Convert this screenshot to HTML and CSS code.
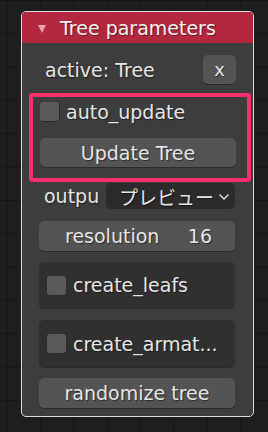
FILE: index.html
```html
<!DOCTYPE html>
<html>
<head>
<meta charset="utf-8">
<link rel="stylesheet" href="styles.css">
</head>
<body>
<div class="node">
  <div class="header">
    <span class="tri"></span>
    <span class="title">Tree parameters</span>
  </div>
  <div class="content">
    <div class="row active-row">
      <span class="label">active: Tree</span>
      <span class="btn xbtn">x</span>
    </div>
    <div class="highlight">
      <div class="check-row">
        <span class="checkbox"></span>
        <span class="label">auto_update</span>
      </div>
      <div class="btn wide">Update Tree</div>
    </div>
    <div class="row out-row">
      <span class="label">outpu</span>
      <div class="dropdown">
        <span class="dd-text">プレビュー</span>
        <svg class="chev" width="10" height="6" viewBox="0 0 10 6"><path d="M1 1 L5 5 L9 1" fill="none" stroke="#e0e0e0" stroke-width="1.5" stroke-linecap="round" stroke-linejoin="round"/></svg>
      </div>
    </div>
    <div class="btn wide numfield">
      <span>resolution</span>
      <span>16</span>
    </div>
    <div class="panel leafs">
      <span class="checkbox"></span>
      <span class="label">create_leafs</span>
    </div>
    <div class="panel armat">
      <span class="checkbox"></span>
      <span class="label">create_armat...</span>
    </div>
    <div class="btn wide rand">randomize tree</div>
  </div>
</div>
</body>
</html>
```
FILE: styles.css
```css
html, body {
  margin: 0;
  padding: 0;
}
body {
  width: 268px;
  height: 432px;
  overflow: hidden;
  background-color: #1e1e1e;
  background-image:
    linear-gradient(to right, #161616 1px, transparent 1px),
    linear-gradient(to bottom, #161616 1px, transparent 1px);
  background-size: 33.33px 33.33px;
  background-position: 6.5px 0;
  font-family: "DejaVu Sans", "Noto Sans CJK JP", sans-serif;
  color: #e6e6e6;
  padding-top: 11px;
  box-sizing: border-box;
}
.node {
  margin-left: 21px;
  width: 233px;
  height: 406px;
  box-sizing: border-box;
  border: 1px solid #dcdcdc;
  border-radius: 5px;
  background: #3d3d3d;
  overflow: hidden;
}
.header {
  height: 31px;
  background: #b3283e;
  display: flex;
  align-items: center;
  padding-left: 16px;
  box-sizing: border-box;
}
.tri {
  width: 0;
  height: 0;
  border-left: 4px solid transparent;
  border-right: 4px solid transparent;
  border-top: 8px solid #e7a3ad;
  margin-top: 2px;
}
.title {
  margin-left: 14px;
  font-size: 19px;
  color: #f2f2f2;
  text-shadow: 1px 1px 1px rgba(0,0,0,0.45);
}
.content {
  display: flex;
  flex-direction: column;
  padding: 12px 0 0 0;
}
.label {
  font-size: 19px;
  text-shadow: 1px 1px 1px rgba(0,0,0,0.5);
  white-space: nowrap;
}
.row {
  display: flex;
  align-items: center;
}
.active-row {
  height: 29px;
  padding-left: 23px;
  padding-right: 17px;
  justify-content: space-between;
}
.btn {
  background: #545454;
  border-radius: 5px;
  box-shadow: 0 1px 0 #2b2b2b;
  font-size: 19px;
  text-shadow: 1px 1px 1px rgba(0,0,0,0.5);
  display: flex;
  align-items: center;
  justify-content: center;
  box-sizing: border-box;
}
.xbtn {
  width: 33px;
  height: 29px;
  font-size: 18px;
}
.highlight {
  margin-top: 9px;
  margin-left: 7px;
  margin-right: 2px;
  height: 89px;
  box-sizing: border-box;
  border: 4px solid #f72d6c;
  border-radius: 3px;
  padding: 2px 11px 0 7px;
  display: flex;
  flex-direction: column;
}
.check-row {
  height: 25px;
  display: flex;
  align-items: center;
}
.checkbox {
  width: 19px;
  height: 19px;
  background: #5a5a5a;
  border-radius: 3px;
  box-shadow: 1px 1px 0 #2c2c2c;
  flex: none;
}
.check-row .label {
  margin-left: 7px;
}
.wide {
  height: 29px;
}
.highlight .wide {
  margin-top: 14px;
}
.out-row {
  margin-top: 1px;
  height: 26px;
  padding-left: 22px;
}
.out-row .label {
  width: 62px;
}
.dropdown {
  width: 129px;
  height: 26px;
  background: #2b2b2b;
  border-radius: 5px;
  display: flex;
  align-items: center;
  padding-left: 13px;
  box-sizing: border-box;
  overflow: hidden;
}
.dd-text {
  font-size: 19px;
  font-family: "Noto Sans CJK JP", sans-serif;
  text-shadow: 1px 1px 1px rgba(0,0,0,0.5);
  white-space: nowrap;
  flex: none;
}
.chev {
  margin-left: 5px;
  margin-top: 2px;
  flex: none;
}
.numfield {
  margin: 12px 18px 0 17px;
  height: 30px;
  justify-content: space-between;
  padding: 0 23px 0 26px;
}
.panel {
  background: #303030;
  border-radius: 5px;
  margin-left: 17px;
  margin-right: 18px;
  display: flex;
  align-items: center;
  padding-left: 8px;
  box-shadow: 0 1px 0 #2a2a2a;
}
.panel .label {
  margin-left: 7px;
}
.leafs {
  margin-top: 11px;
  height: 46px;
}
.armat {
  margin-top: 12px;
  height: 47px;
}
.rand {
  margin: 11px 18px 0 17px;
  height: 30px;
}
```
